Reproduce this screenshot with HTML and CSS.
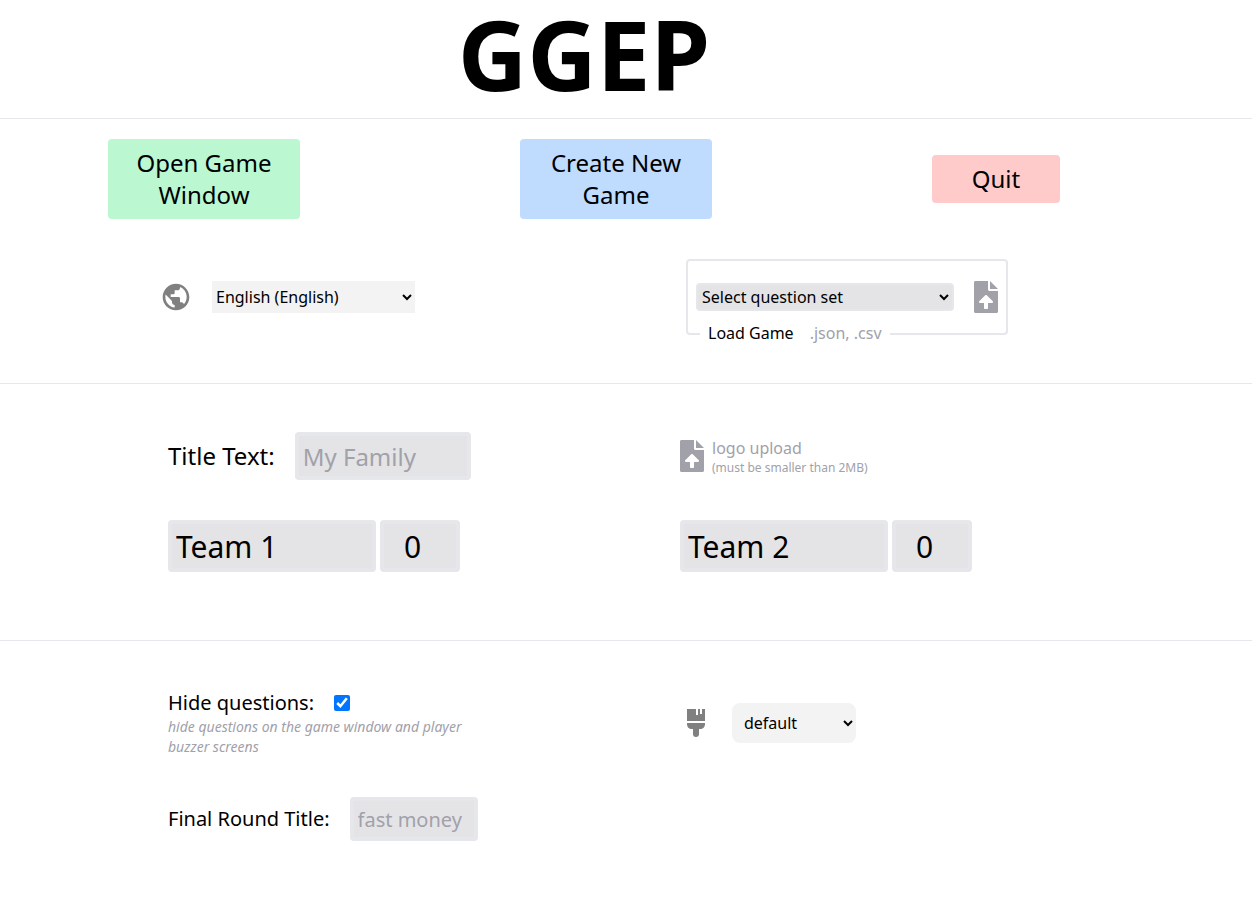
FILE: index.html
```html
<!DOCTYPE html>
<html lang="en">
<head>
<meta charset="utf-8">
<title>GGEP</title>
<link rel="stylesheet" href="styles.css">
</head>
<body>
<svg class="sprite" aria-hidden="true">
  <symbol id="file-upload" viewBox="0 0 384 512"><path d="M224 136V0H24C10.700 0 0 10.700 0 24v464c0 13.300 10.700 24 24 24h336c13.300 0 24-10.700 24-24V160H248c-13.200 0-24-10.800-24-24zm65.180 216.010H224v80c0 8.840-7.160 16-16 16h-32c-8.840 0-16-7.160-16-16v-80H94.820c-14.280 0-21.410-17.290-11.270-27.360l96.420-95.700c6.650-6.610 17.390-6.610 24.040 0l96.420 95.700c10.150 10.070 3.030 27.360-11.250 27.360zM384 128L256 0v128z"/></symbol>
</svg>
<header class="masthead"><h1 class="title">GGEP</h1></header>
<main>
  <section class="section launch">
    <div class="actions">
      <button class="action open" type="button">Open Game Window</button>
      <button class="action create" type="button">Create New Game</button>
      <button class="action quit" type="button">Quit</button>
    </div>
    <div class="setup">
      <div class="language">
        <svg class="icon-globe" viewBox="0 0 24 24" aria-hidden="true"><path d="M12 2C6.480 2 2 6.480 2 12s4.480 10 10 10 10-4.480 10-10S17.520 2 12 2zm-1 17.930c-3.950-.490-7-3.850-7-7.930 0-.620.080-1.210.210-1.790L9 15v1c0 1.100.900 2 2 2v1.930zm6.900-2.540c-.260-.810-1-1.390-1.900-1.390h-1v-3c0-.550-.450-1-1-1H8v-2h2c.550 0 1-.450 1-1V7h2c1.100 0 2-.900 2-2v-.410c2.930 1.190 5 4.060 5 7.410 0 2.080-.800 3.970-2.100 5.390z"/></svg>
        <select class="language-select" aria-label="Language"><option>English (English)</option></select>
      </div>
      <fieldset class="load">
        <legend class="load-legend">Load Game <span class="muted">.json, .csv</span></legend>
        <select class="question-select" aria-label="Question set"><option>Select question set</option></select>
        <button class="icon-button" type="button" aria-label="Upload game"><svg class="icon-file"><use href="#file-upload"/></svg></button>
      </fieldset>
    </div>
  </section>
  <section class="section teams">
    <div class="field">
      <label class="label-large" for="title-text">Title Text:</label>
      <input class="input title-input" id="title-text" type="text" placeholder="My Family">
    </div>
    <div class="logo-upload">
      <button class="icon-button" type="button" aria-label="Upload logo"><svg class="icon-file"><use href="#file-upload"/></svg></button>
      <div class="upload-text"><span>logo upload</span><small class="upload-note">(must be smaller than 2MB)</small></div>
    </div>
    <div class="team">
      <input class="input team-name" type="text" value="Team 1" aria-label="Team 1 name">
      <input class="input team-score" type="text" value="0" aria-label="Team 1 points">
    </div>
    <div class="team">
      <input class="input team-name" type="text" value="Team 2" aria-label="Team 2 name">
      <input class="input team-score" type="text" value="0" aria-label="Team 2 points">
    </div>
  </section>
  <section class="section options">
    <div class="hide">
      <div class="field">
        <label class="label" for="hide">Hide questions:</label>
        <input class="check" id="hide" type="checkbox" checked>
      </div>
      <p class="hint">hide questions on the game window and player buzzer screens</p>
    </div>
    <div class="theme">
      <svg class="icon-brush" viewBox="0 0 18 28" aria-hidden="true"><path d="M0 0h9v6h2V0h2v5h2V0h3v12H0zM0 14h18v1c0 3-2 5-5 5h-1v5a3 3 0 0 1-6 0v-5H5c-3 0-5-2-5-5z"/></svg>
      <select class="theme-select" aria-label="Theme"><option>default</option></select>
    </div>
    <div class="field">
      <label class="label" for="final">Final Round Title:</label>
      <input class="input final-input" id="final" type="text" placeholder="fast money">
    </div>
  </section>
</main>
</body>
</html>
```
FILE: styles.css
```css
* { box-sizing: border-box; margin: 0; }
body { background: #fff; color: #000; font: 16px/24px "Noto Sans", sans-serif; }
button, input, select { font: inherit; color: inherit; }
button { border: 0; padding: 0; cursor: pointer; }
.sprite { display: none; }
.masthead { padding: 6px 84px 16px 0; text-align: center; }
.title { font-size: 96px; line-height: 96px; font-weight: 700; }
.section { border-top: 1px solid #e5e7eb; }
.actions { display: flex; align-items: center; justify-content: space-between; padding: 20px 192px 40px 108px; }
.action { padding: 8px 16px; border-radius: 4px; font-size: 24px; line-height: 32px; }
.open, .create { width: 192px; }
.quit { width: 128px; }
.open { background: #bbf7d0; }
.create { background: #bfdbfe; }
.quit { background: #fecaca; }
.setup { display: grid; grid-template-columns: 1fr 1fr; align-items: center; padding: 0 40px 48px 160px; }
.language { display: flex; align-items: center; gap: 20px; }
.icon-globe { width: 32px; height: 32px; fill: #808080; }
.language-select { width: 203px; height: 32px; border: 0; background: #f3f3f3; }
.load { position: relative; display: flex; align-items: center; gap: 20px; justify-self: start; height: 76px; padding: 0 8px; border: 2px solid #e5e7eb; border-radius: 4px; }
.load-legend { position: absolute; left: 12px; bottom: -12px; display: flex; gap: 16px; padding: 0 8px; background: #fff; }
.muted, .logo-upload, .hint { color: #a1a1aa; }
.question-select { width: 258px; height: 28px; padding: 0; border: 2px solid #e5e7eb; border-radius: 4px; background: #e4e4e7; }
.icon-button { display: flex; background: none; color: #a1a1aa; }
.icon-file { width: 24px; height: 32px; fill: currentColor; }
.teams { display: grid; grid-template-columns: 1fr 1fr; row-gap: 40px; padding: 48px 60px 68px 168px; }
.field { display: flex; align-items: center; gap: 20px; }
.label-large { font-size: 24px; line-height: 32px; }
.label { font-size: 20px; line-height: 28px; }
.input { min-width: 0; padding: 0 4px; border: 4px solid #e5e7eb; border-radius: 4px; background: #e4e4e7; }
.input::placeholder { color: #a1a1aa; opacity: 1; }
.title-input { width: 176px; height: 48px; font-size: 24px; line-height: 32px; }
.logo-upload { display: flex; align-items: center; gap: 8px; }
.upload-text { display: flex; flex-direction: column; }
.upload-note { font-size: 12px; line-height: 16px; }
.team { display: flex; gap: 4px; }
.team-name, .team-score { height: 52px; font-size: 30px; line-height: 36px; }
.team-name { width: 208px; }
.team-score { width: 80px; padding-left: 20px; }
.options { display: grid; grid-template-columns: 1fr 1fr; align-items: center; row-gap: 40px; padding: 48px 60px 80px 168px; }
.check { width: 16px; height: 16px; accent-color: #0075ff; }
.hint { max-width: 320px; font-size: 14px; line-height: 20px; font-style: italic; }
.theme { display: flex; align-items: center; gap: 27px; padding-left: 7px; }
.icon-brush { width: 18px; height: 28px; fill: #808080; }
.theme-select { width: 124px; height: 40px; padding: 0 8px; border: 0; border-radius: 8px; background: #f3f3f3; }
.final-input { width: 128px; height: 44px; font-size: 20px; line-height: 28px; }
```
